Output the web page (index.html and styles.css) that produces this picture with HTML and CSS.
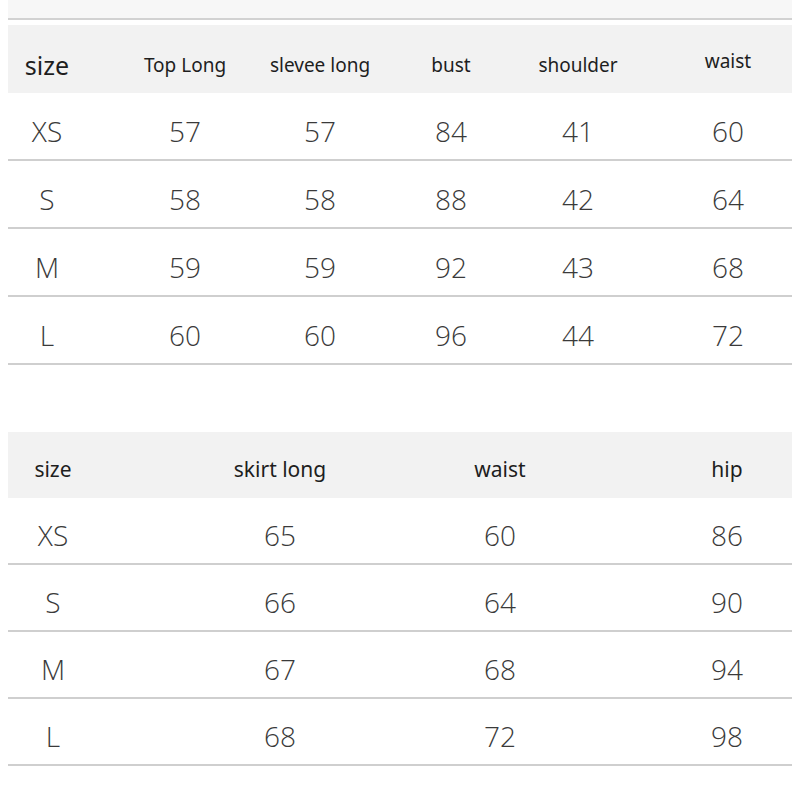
FILE: index.html
```html
<!DOCTYPE html>
<html>
<head>
<meta charset="utf-8">
<link rel="stylesheet" href="styles.css">
</head>
<body>
<div class="page">
  <div class="band"></div>
  <div class="rule"></div>

  <div class="table t1">
    <div class="row head">
      <div class="cell big">size</div>
      <div class="cell">Top Long</div>
      <div class="cell">slevee long</div>
      <div class="cell">bust</div>
      <div class="cell">shoulder</div>
      <div class="cell up">waist</div>
    </div>
    <div class="row">
      <div class="cell">XS</div><div class="cell">57</div><div class="cell">57</div><div class="cell">84</div><div class="cell">41</div><div class="cell">60</div>
    </div>
    <div class="row">
      <div class="cell">S</div><div class="cell">58</div><div class="cell">58</div><div class="cell">88</div><div class="cell">42</div><div class="cell">64</div>
    </div>
    <div class="row">
      <div class="cell">M</div><div class="cell">59</div><div class="cell">59</div><div class="cell">92</div><div class="cell">43</div><div class="cell">68</div>
    </div>
    <div class="row">
      <div class="cell">L</div><div class="cell">60</div><div class="cell">60</div><div class="cell">96</div><div class="cell">44</div><div class="cell">72</div>
    </div>
  </div>

  <div class="table t2">
    <div class="row head">
      <div class="cell">size</div>
      <div class="cell">skirt long</div>
      <div class="cell">waist</div>
      <div class="cell">hip</div>
    </div>
    <div class="row">
      <div class="cell">XS</div><div class="cell">65</div><div class="cell">60</div><div class="cell">86</div>
    </div>
    <div class="row">
      <div class="cell">S</div><div class="cell">66</div><div class="cell">64</div><div class="cell">90</div>
    </div>
    <div class="row">
      <div class="cell">M</div><div class="cell">67</div><div class="cell">68</div><div class="cell">94</div>
    </div>
    <div class="row">
      <div class="cell">L</div><div class="cell">68</div><div class="cell">72</div><div class="cell">98</div>
    </div>
  </div>
</div>
</body>
</html>
```

FILE: styles.css
```css
html, body {
  margin: 0;
  padding: 0;
  background: #ffffff;
}

.page {
  padding: 0 8px;
  font-family: "Noto Sans", "Open Sans", sans-serif;
  color: #3a3a3a;
}

.band {
  height: 18px;
  background: #f7f7f7;
}

.rule {
  height: 2px;
  background: #d2d2d2;
  margin-bottom: 5px;
}

.row {
  display: grid;
  height: 68px;
  box-sizing: border-box;
  border-bottom: 2px solid #cfcfcf;
}

.cell {
  display: flex;
  justify-content: center;
  align-items: center;
  white-space: nowrap;
  min-width: 0;
  padding-top: 9px;
  font-family: "Open Sans", "Noto Sans", sans-serif;
  font-stretch: 90%;
  font-weight: 360;
  font-size: 28px;
  color: #3a3a3a;
}

.row.head {
  background: #f2f2f2;
  border-bottom: none;
}

.row.head .cell {
  font-family: "Noto Sans", "Open Sans", sans-serif;
  font-stretch: 100%;
  font-weight: 400;
  font-size: 19px;
  color: #1e1e1e;
  padding-top: 11px;
}

.row.head .cell.big {
  font-size: 25px;
  padding-top: 12px;
}

.row.head .cell.up {
  padding-top: 4px;
}

/* table 1 column geometry: centres at 47, 185, 320, 451, 578, 728 */
.t1 .row {
  grid-template-columns: 78px 198px 72px 190px 64px 1fr;
}

.t1 .row .cell:last-child {
  padding-left: 54px;
}

/* table 2 */
.t2 {
  margin-top: 67px;
}

.t2 .row {
  height: 67px;
  grid-template-columns: 90px 364px 76px 1fr;
}

.t2 .row.head {
  height: 66px;
}

.t2 .row.head .cell {
  font-size: 21px;
  padding-top: 8px;
}

.t2 .row .cell:last-child {
  padding-left: 124px;
}
```
